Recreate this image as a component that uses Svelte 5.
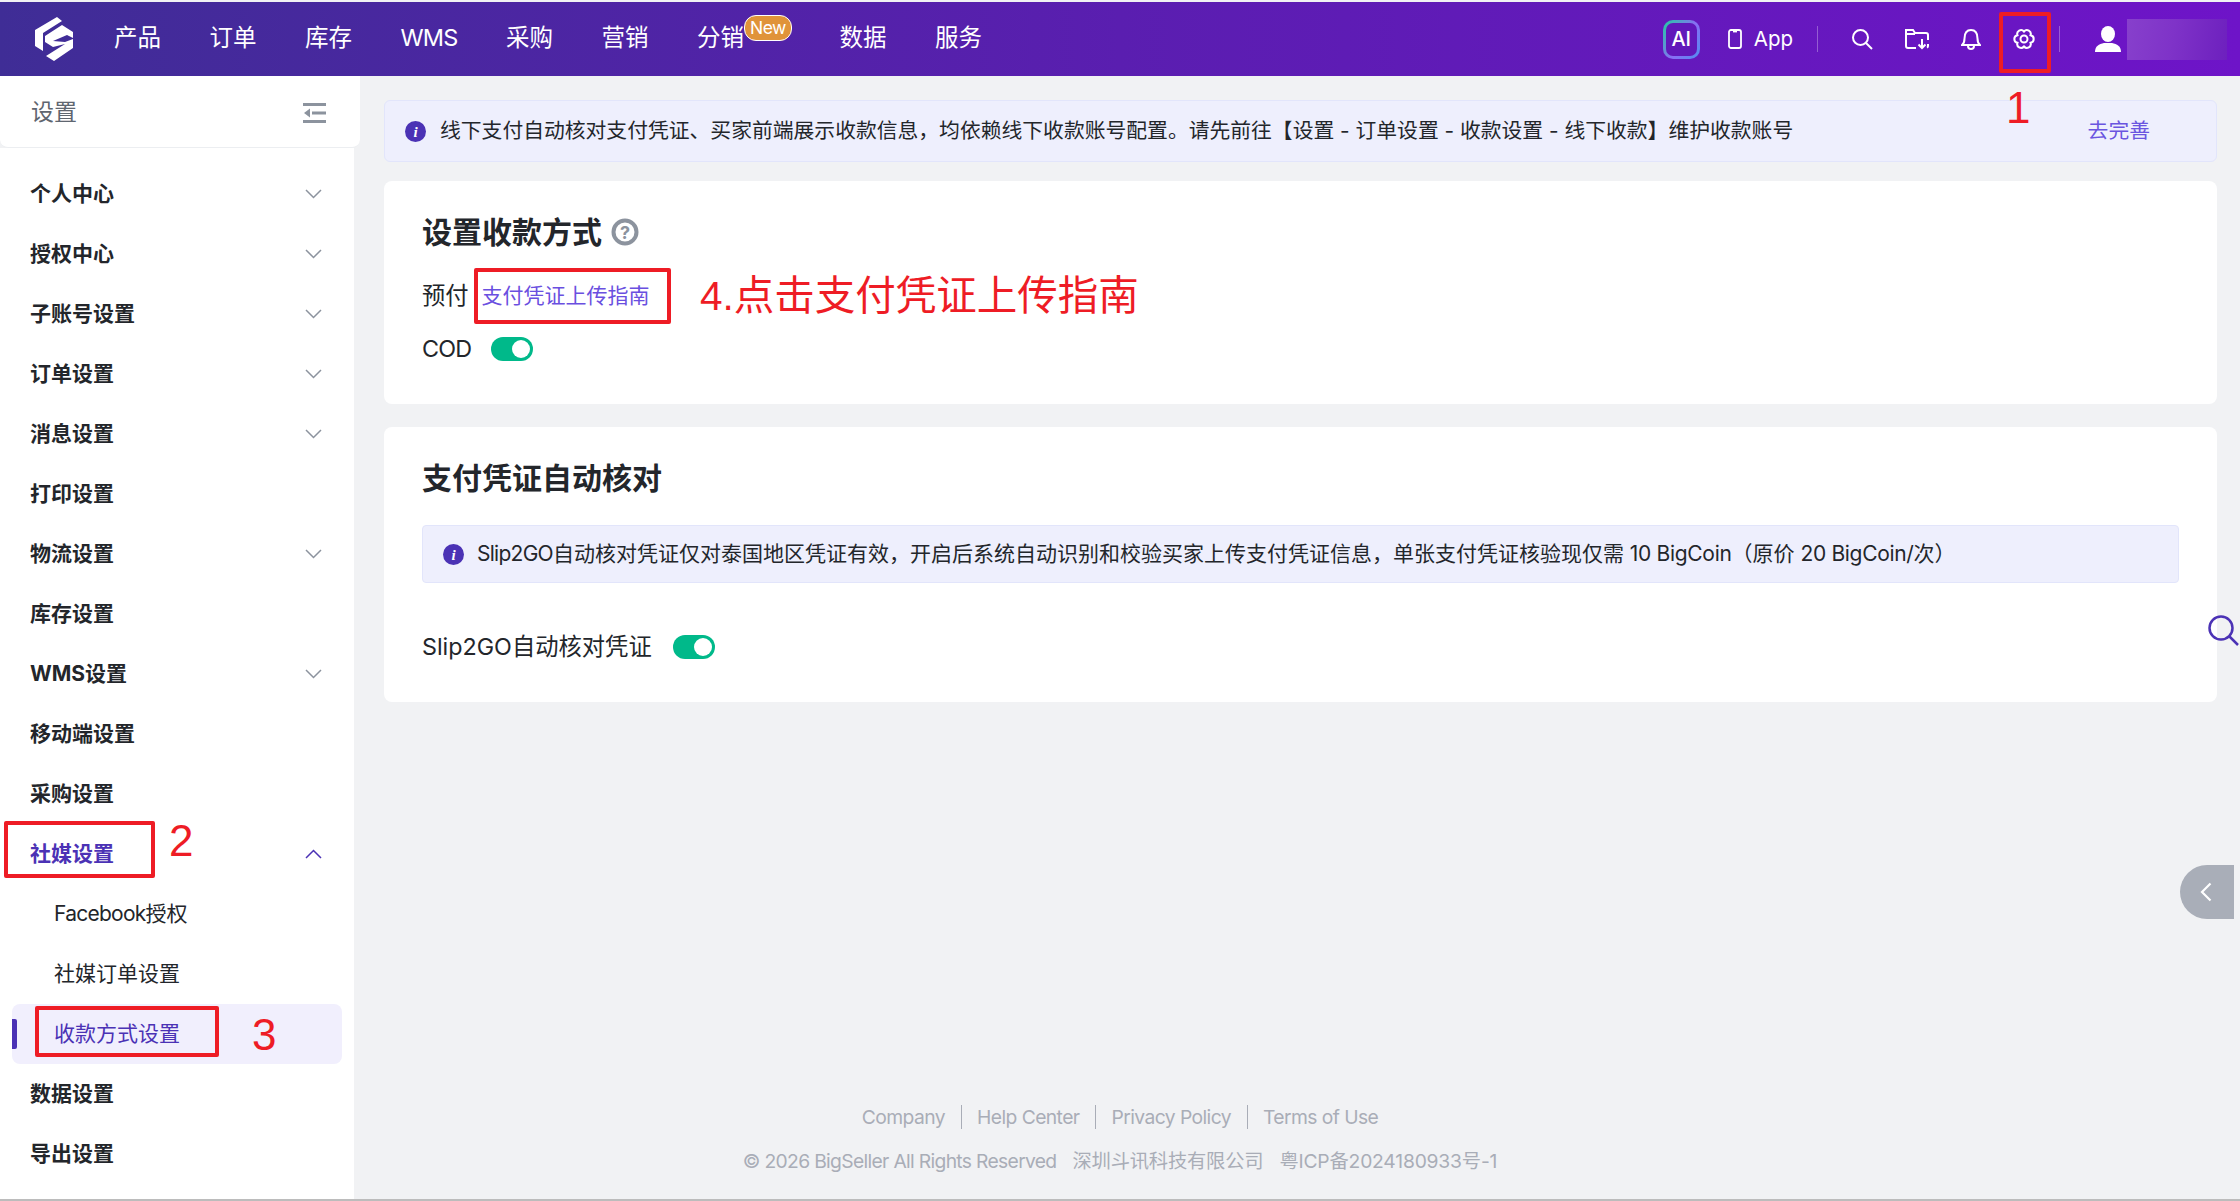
<script>
	const navItems = ['产品', '订单', '库存', 'WMS', '采购', '营销', '分销', '数据', '服务'];

	const menuItems = [
		{ label: '个人中心', arrow: 'down' },
		{ label: '授权中心', arrow: 'down' },
		{ label: '子账号设置', arrow: 'down' },
		{ label: '订单设置', arrow: 'down' },
		{ label: '消息设置', arrow: 'down' },
		{ label: '打印设置' },
		{ label: '物流设置', arrow: 'down' },
		{ label: '库存设置' },
		{ label: 'WMS设置', arrow: 'down' },
		{ label: '移动端设置' },
		{ label: '采购设置' },
		{ label: '社媒设置', arrow: 'up', open: true },
		{ label: '社媒订单设置', sub: true },
		{ label: '收款方式设置', sub: true, active: true },
		{ label: '数据设置' },
		{ label: '导出设置' }
	];

	const footerLinks = ['Company', 'Help Center', 'Privacy Policy', 'Terms of Use'];
</script>

<div class="page">
	<header class="topbar">
		<svg class="logo" viewBox="0 0 38 44" aria-hidden="true">
			<path fill="#fff" d="M22 0 L27 4 L8 16 L8 34 L0 29 L0 13 Z" />
			<path fill="#fff" d="M10 19 L27 8 L38 15 L38 21 L32 18 L18 24 L30 25 L38 22 L38 31 L19 44 L11 39 L30 27 L18 30 L10 25 Z" />
		</svg>
		<nav class="nav">
			{#each navItems as item}
				<span class="nav-item" class:lat={item === 'WMS'}>
					{item}
					{#if item === '分销'}
						<span class="new-badge">New</span>
					{/if}
				</span>
			{/each}
		</nav>
		<div class="top-actions">
			<span class="ai-badge">AI</span>
			<span class="app-link">
				<svg width="14" height="20" viewBox="0 0 14 20" fill="none" stroke="#fff" stroke-width="1.8">
					<rect x="1" y="1" width="12" height="18" rx="2" />
					<path d="M5 2.500h4" />
				</svg>
				App
			</span>
			<span class="top-divider first"></span>
			<svg class="top-icon" width="22" height="22" viewBox="0 0 22 22" fill="none" stroke="#fff" stroke-width="2">
				<circle cx="9.500" cy="9.500" r="7.500" />
				<path d="M15 15l6 6" />
			</svg>
			<svg class="top-icon" width="24" height="22" viewBox="0 0 24 22" fill="none" stroke="#fff" stroke-width="2">
				<path d="M11 20H3a2 2 0 0 1-2-2V2h7l2 3h11a2 2 0 0 1 2 2v5" />
				<path d="M1 6h9M23 16v2a2 2 0 0 1-1 1.700" />
				<path d="M17 11v9M13.500 16.500L17 20l3.500-3.500" />
			</svg>
			<svg class="top-icon" width="20" height="23" viewBox="0 0 20 23" fill="none" stroke="#fff" stroke-width="2">
				<path d="M1 17c2-1.500 2.500-3 2.500-6.500C3.500 5 6 2 10 2s6.500 3 6.500 8.500c0 3.500.5 5 2.500 6.500z" />
				<path d="M7 18c0 4 6 4 6 0" />
			</svg>
			<svg class="top-icon" width="22" height="22" viewBox="0 0 22 22" fill="none" stroke="#fff" stroke-width="2">
				<path d="M17.500 7.250A3.800 3.800 0 0 1 17.500 14.750A3.800 3.800 0 0 1 11 18.500A3.800 3.800 0 0 1 4.500 14.750A3.800 3.800 0 0 1 4.500 7.250A3.800 3.800 0 0 1 11 3.500A3.800 3.800 0 0 1 17.500 7.250Z" />
				<circle cx="11" cy="11" r="3.500" />
			</svg>
			<span class="top-divider second"></span>
			<svg class="user-icon" width="26" height="26" viewBox="0 0 26 26" fill="#fff">
				<ellipse cx="13" cy="8" rx="7" ry="8" />
				<path d="M0 26c0-6 4-8 9-9h8c5 1 9 3 9 9z" />
			</svg>
			<span class="user-blur"></span>
		</div>
	</header>

	<div class="body">
		<aside class="sidebar">
			<div class="side-head">
				<span>设置</span>
				<svg width="23" height="20" viewBox="0 0 23 20" fill="#8c939e">
					<rect width="23" height="3" />
					<rect x="9" y="8.500" width="14" height="3" />
					<rect y="17" width="23" height="3" />
					<path d="M1 10l6-4.500v9z" />
				</svg>
			</div>
			<ul class="menu">
				{#each menuItems as item}
					{#if item.label === '社媒订单设置'}
						<li class="menu-item sub"><span><span class="lat">Facebook</span>授权</span></li>
					{/if}
					<li class="menu-item" class:sub={item.sub} class:open={item.open} class:active={item.active}>
						<span>{item.label}</span>
						{#if item.arrow}
							<svg class="chev" width="17" height="10" viewBox="0 0 17 10" fill="none" stroke="currentColor" stroke-width="1.500">
								<path d={item.arrow === 'up' ? 'M1 9l7.500-7.500L16 9' : 'M1 1l7.500 7.500L16 1'} />
							</svg>
						{/if}
					</li>
				{/each}
			</ul>
		</aside>

		<main class="main">
			<div class="notice">
				<svg class="info" width="21" height="21" viewBox="0 0 21 21" aria-hidden="true">
					<circle cx="10.500" cy="10.500" r="10.500" fill="#4b32b5" />
					<text x="10.500" y="16" text-anchor="middle" fill="#fff" font-size="15" font-style="italic" font-weight="700" font-family="Liberation Serif, serif">i</text>
				</svg>
				<span class="notice-text">线下支付自动核对支付凭证、买家前端展示收款信息，均依赖线下收款账号配置。请先前往【设置 - 订单设置 - 收款设置 - 线下收款】维护收款账号</span>
				<span class="notice-link">去完善</span>
			</div>

			<section class="card first-card">
				<h2 class="title">
					设置收款方式
					<svg width="28" height="28" viewBox="0 0 28 28" fill="none" aria-hidden="true">
						<circle cx="14" cy="14" r="11.500" stroke="#8c939e" stroke-width="4" />
						<text x="14" y="20.500" text-anchor="middle" fill="#8c939e" font-size="18" font-weight="700" font-family="Inter, sans-serif">?</text>
					</svg>
				</h2>
				<div class="row prepay">
					<span>预付</span>
					<span class="guide-link">支付凭证上传指南</span>
				</div>
				<div class="row cod">
					<span class="lat">COD</span>
					<span class="toggle"><i></i></span>
				</div>
			</section>

			<section class="card second-card">
				<h2 class="title">支付凭证自动核对</h2>
				<div class="alert">
					<svg class="info" width="21" height="21" viewBox="0 0 21 21" aria-hidden="true">
						<circle cx="10.500" cy="10.500" r="10.500" fill="#4b32b5" />
						<text x="10.500" y="16" text-anchor="middle" fill="#fff" font-size="15" font-style="italic" font-weight="700" font-family="Liberation Serif, serif">i</text>
					</svg>
					<span><span class="lat">Slip2GO</span>自动核对凭证仅对泰国地区凭证有效，开启后系统自动识别和校验买家上传支付凭证信息，单张支付凭证核验现仅需 <span class="lat-soft">10 BigCoin</span>（原价 <span class="lat-soft">20 BigCoin/</span>次）</span>
				</div>
				<div class="row slip">
					<span>Slip2GO自动核对凭证</span>
					<span class="toggle"><i></i></span>
				</div>
			</section>

			<footer class="footer">
				<div class="footer-links">
					{#each footerLinks as link}
						<span>{link}</span>
					{/each}
				</div>
				<div class="copyright">
					<span class="lat">© 2026 BigSeller All Rights Reserved</span>
					<span>深圳斗讯科技有限公司</span>
					<span>粤ICP备2024180933号-1</span>
				</div>
			</footer>
		</main>
	</div>

	<!-- floating widgets -->
	<svg class="float-search" width="31" height="31" viewBox="0 0 31 31" fill="none" stroke="#4b32b5" stroke-width="2.500">
		<circle cx="13" cy="13" r="11.500" />
		<path d="M21 21l9 9" />
	</svg>
	<div class="float-handle">
		<svg width="12" height="20" viewBox="0 0 12 20" fill="none" stroke="#fff" stroke-width="2.200">
			<path d="M10.500 1.500L2 10l8.500 8.500" />
		</svg>
	</div>

	<!-- red annotations painted over the screenshot -->
	<span class="mark box-gear"></span>
	<span class="mark box-menu"></span>
	<span class="mark box-sub"></span>
	<span class="mark box-guide"></span>
	<span class="note n1">1</span>
	<span class="note n2">2</span>
	<span class="note n3">3</span>
	<span class="note n4">4.点击支付凭证上传指南</span>

	<div class="bottom-line"></div>
</div>

<style>
	:global(body) {
		margin: 0;
		background: #f1f2f4;
	}

	.page {
		position: relative;
		width: 2240px;
		height: 1201px;
		overflow: hidden;
		display: flex;
		flex-direction: column;
		font-family: Inter, 'Noto Sans CJK SC', sans-serif;
		line-height: 1.3;
		color: #23262b;
	}

	.lat {
		letter-spacing: -0.035em;
	}

	.lat-soft {
		letter-spacing: -0.015em;
	}

	.topbar {
		flex: none;
		height: 74px;
		margin-top: 2px;
		display: flex;
		align-items: center;
		background: linear-gradient(90deg, #3f2d96 0%, #5a1eb0 50%, #6e14c8 100%);
		color: #fff;
	}

	.logo {
		width: 38px;
		height: 44px;
		margin-left: 35px;
	}

	.nav {
		display: flex;
		gap: 48.500px;
		margin-left: 41px;
		margin-top: -2px;
		font-size: 23.500px;
	}

	.nav-item {
		position: relative;
	}

	.nav-item:nth-child(7) {
		margin-right: 47px;
	}

	.new-badge {
		position: absolute;
		left: 47px;
		top: -8px;
		height: 24px;
		width: 46px;
		border: 1px solid #fff;
		border-radius: 12px;
		background: #e09339;
		font-size: 17.500px;
		letter-spacing: -0.03em;
		line-height: 24px;
		text-align: center;
	}

	.top-actions {
		margin-left: auto;
		display: flex;
		align-items: center;
		padding-right: 13px;
	}

	.ai-badge {
		width: 37px;
		height: 39px;
		box-sizing: border-box;
		display: grid;
		place-items: center;
		border: 3px solid transparent;
		border-radius: 10px;
		background: linear-gradient(#6118ba, #6118ba) padding-box,
			linear-gradient(125deg, #1fd0a0 0%, #8a6cf5 55%, #4f8ff0 100%) border-box;
		font-size: 20px;
		font-weight: 500;
	}

	.app-link {
		display: flex;
		align-items: center;
		gap: 12px;
		margin-left: 28px;
		font-size: 20.500px;
	}

	.top-divider {
		width: 1px;
		height: 26px;
		background: rgba(255, 255, 255, 0.3);
	}

	.top-divider.first {
		margin: 0 33px 0 24px;
	}

	.top-divider.second {
		margin: 0 35px 0 24px;
	}

	.top-icon + .top-icon {
		margin-left: 32px;
	}

	.user-icon {
		flex: none;
	}

	.user-blur {
		width: 100px;
		height: 41px;
		margin-left: 6px;
		background: linear-gradient(100deg, #8740cc 0%, #7f33c8 45%, #6d20be 100%);
	}

	.body {
		flex: 1;
		min-height: 0;
		display: flex;
	}

	.sidebar {
		flex: none;
		width: 360px;
		display: flex;
		flex-direction: column;
	}

	.side-head {
		flex: none;
		height: 72px;
		box-sizing: border-box;
		display: flex;
		align-items: center;
		justify-content: space-between;
		padding: 2px 34px 0 31px;
		background: #fff;
		border-bottom: 1px solid #eceef1;
		border-radius: 0 0 8px 8px;
		font-size: 23px;
		color: #5f6670;
	}

	.menu {
		flex: 1;
		width: 354px;
		margin: 16px 0 0;
		padding: 0;
		list-style: none;
		background: #fff;
		box-shadow: 0 -16px 0 #fff;
	}

	.menu-item {
		position: relative;
		height: 60px;
		display: flex;
		align-items: center;
		justify-content: space-between;
		padding: 0 32px 0 30px;
		font-size: 21px;
		font-weight: 700;
	}

	.menu-item.open {
		color: #4b32b5;
	}

	.menu-item.sub {
		padding-left: 54px;
		font-weight: 400;
	}

	.menu-item.active {
		margin: 0 12px;
		padding-left: 42px;
		background: #f1effd;
		border-radius: 8px;
		color: #4b32b5;
	}

	.menu-item.active::before {
		content: '';
		position: absolute;
		left: 0;
		top: 15px;
		width: 5px;
		height: 30px;
		background: #4b32b5;
		border-radius: 0 2px 2px 0;
	}

	.chev {
		color: #8c939e;
	}

	.open .chev {
		color: #4b32b5;
	}

	.main {
		flex: 1;
		min-width: 0;
		display: flex;
		flex-direction: column;
		padding: 24px 23px 0 24px;
	}

	.notice {
		flex: none;
		height: 62px;
		box-sizing: border-box;
		display: flex;
		align-items: center;
		padding: 0 66px 0 20px;
		background: #eeeffd;
		border: 1px solid #e2e5fb;
		border-radius: 6px;
		font-size: 20.800px;
	}

	.info {
		flex: none;
	}

	.notice-text {
		margin-left: 14px;
	}

	.notice-link {
		margin-left: auto;
		color: #6a55e0;
	}

	.card {
		background: #fff;
		border-radius: 8px;
		padding: 0 38px;
	}

	.first-card {
		height: 223px;
		margin-top: 19px;
	}

	.second-card {
		height: 275px;
		margin-top: 23px;
	}

	.title {
		display: flex;
		align-items: center;
		gap: 9px;
		margin: 0;
		height: 40px;
		padding-top: 31px;
		font-size: 30px;
		font-weight: 700;
	}

	.row {
		display: flex;
		align-items: center;
		font-size: 23.300px;
		line-height: 30px;
	}

	.prepay {
		margin-top: 29px;
		gap: 13px;
	}

	.guide-link {
		font-size: 21px;
		color: #6a4fe0;
	}

	.cod {
		margin-top: 23px;
		gap: 20px;
	}

	.slip {
		margin-top: 49px;
		gap: 21px;
	}

	.toggle {
		position: relative;
		width: 42px;
		height: 24px;
		border-radius: 12px;
		background: #00b98a;
	}

	.toggle i {
		position: absolute;
		right: 3px;
		top: 3px;
		width: 18px;
		height: 18px;
		border-radius: 50%;
		background: #fff;
	}

	.alert {
		height: 58px;
		box-sizing: border-box;
		margin-top: 27px;
		display: flex;
		align-items: center;
		gap: 13px;
		padding-left: 20px;
		background: #eeeffd;
		border: 1px solid #e2e5fb;
		border-radius: 4px;
		font-size: 21px;
	}

	/* footer runs under the sidebar too, centred on the whole page */
	.footer {
		margin: auto -23px 0 -384px;
		padding-bottom: 26px;
		color: #a9adb7;
		font-size: 19.300px;
		text-align: center;
	}

	.footer-links {
		display: flex;
		justify-content: center;
		letter-spacing: -0.03em;
	}

	.footer-links span {
		padding: 0 15.500px;
		line-height: 24px;
	}

	.footer-links span + span {
		border-left: 1px solid #a9adb7;
	}

	.copyright {
		display: flex;
		justify-content: center;
		gap: 16px;
		margin-top: 18px;
		line-height: 28px;
		letter-spacing: -0.01em;
	}

	.float-search {
		position: absolute;
		left: 2208px;
		top: 615px;
	}

	.float-handle {
		position: absolute;
		left: 2180px;
		top: 865px;
		width: 54px;
		height: 54px;
		box-sizing: border-box;
		padding: 17px 0 0 20px;
		background: #a9aeb8;
		border-radius: 27px 0 0 27px;
	}

	.float-handle svg {
		display: block;
	}

	.mark {
		position: absolute;
		box-sizing: border-box;
		border: 4px solid #ee1c25;
		border-radius: 2px;
	}

	.box-gear {
		left: 1999px;
		top: 12px;
		width: 52px;
		height: 61px;
	}

	.box-menu {
		left: 4px;
		top: 821px;
		width: 151px;
		height: 57px;
	}

	.box-sub {
		left: 35px;
		top: 1006px;
		width: 184px;
		height: 51px;
	}

	.box-guide {
		left: 474px;
		top: 268px;
		width: 197px;
		height: 56px;
	}

	.note {
		position: absolute;
		color: #ee1c25;
		font-family: 'Liberation Sans', 'Noto Sans CJK SC', sans-serif;
		font-size: 44px;
		line-height: 48px;
	}

	.n1 {
		left: 2006px;
		top: 84px;
	}

	.n2 {
		left: 169px;
		top: 817px;
	}

	.n3 {
		left: 252px;
		top: 1011px;
	}

	.n4 {
		left: 700px;
		top: 272px;
		font-size: 40.500px;
		white-space: nowrap;
	}

	.bottom-line {
		position: absolute;
		left: 0;
		right: 0;
		bottom: 0;
		height: 2px;
		background: #bcbcbc;
	}
</style>
